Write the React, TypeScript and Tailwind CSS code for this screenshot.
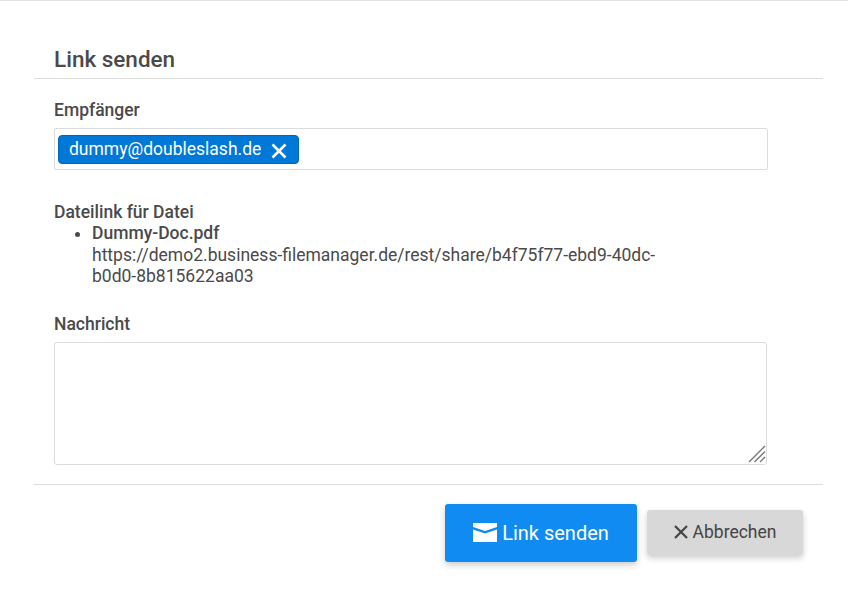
const App = () => {
  return (
    <div className="h-[589px] w-[848px] overflow-hidden bg-white font-['Roboto',sans-serif] text-[#4a4a4a] border-t border-[#e2e2e2]">
      <div className="ml-[34px] mr-[25px] h-[78px] border-b border-[#dcdcdc] pl-5 pt-[44px]">
        <h1 className="text-[22.5px] leading-[28px] font-medium">Link senden</h1>
      </div>

      <div className="pl-[54px] pr-[80px]">
        <div className="mt-[20px] text-[17.5px] leading-[22px] font-medium">Empfänger</div>
        <div className="mt-[7px] flex h-[42px] w-[714px] items-center rounded-[2px] border border-[#dcdcdc] pl-[3px]">
          <div className="flex h-[29px] w-[241px] items-center rounded-[4px] border border-[#0067b8] bg-[#0078d7] pl-[10px] text-[17.5px] text-white">
            dummy@doubleslash.de
            <svg className="ml-[10px] mt-[3px] h-[16px] w-[16px]" viewBox="0 0 16 16" fill="none" stroke="white" strokeWidth="2.6">
              <path d="M1.5 1.5 14.5 14.5M14.5 1.5 1.5 14.5" />
            </svg>
          </div>
        </div>

        <div className="mt-[31px] text-[17.5px] leading-[22px] font-medium">Dateilink für Datei</div>
        <ul className="w-[620px] list-disc pl-[38px] text-[17.5px] leading-[21.5px] marker:text-[#4a4a4a]">
          <li>
            <div className="font-medium">Dummy-Doc.pdf</div>
            <div className="break-words">https://demo2.business-filemanager.de/rest/share/b4f75f77-ebd9-40dc-b0d0-8b815622aa03</div>
          </li>
        </ul>

        <div className="mt-[25px] text-[17.5px] leading-[22px] font-medium">Nachricht</div>
        <div className="relative mt-[7px] w-[713px]">
          <textarea className="block h-[123px] w-full resize-none rounded-[3px] border border-[#dcdcdc] outline-none" />
          <svg className="absolute bottom-[2px] right-[1px] h-[18px] w-[18px]" viewBox="0 0 18 18" fill="none" stroke="#777" strokeWidth="1.4">
            <path d="M1 17 17 1M6.5 17 17 6.5M12 17 17 12" />
          </svg>
        </div>
      </div>

      <div className="ml-[34px] mr-[25px] mt-[19px] flex h-[105px] items-start justify-end border-t border-[#dcdcdc] pt-[19px] pr-[20px]">
        <button className="flex h-[58px] w-[192px] items-center justify-center rounded-[3px] bg-[#0f8bf1] text-[20px] text-white shadow-[0_3px_6px_rgba(0,0,0,0.2)]">
          <svg className="mr-[5px] h-[19px] w-[24px]" viewBox="0 0 24 19" fill="white">
            <path d="M0 0H24V4L12 8 0 4ZM0 6.5 12 10.5 24 6.5V19H0Z" />
          </svg>
          Link senden
        </button>
        <button className="mt-[6px] ml-[10px] flex h-[45px] w-[156px] items-center justify-center rounded-[3px] bg-[#d8d8d8] text-[17.5px] text-[#444] shadow-[0_3px_6px_rgba(0,0,0,0.2)]">
          <svg className="mr-[5px] h-[14px] w-[14px]" viewBox="0 0 14 14" fill="none" stroke="#444" strokeWidth="2.2">
            <path d="M1 1 13 13M13 1 1 13" />
          </svg>
          Abbrechen
        </button>
      </div>
    </div>
  );
};

export default App;
